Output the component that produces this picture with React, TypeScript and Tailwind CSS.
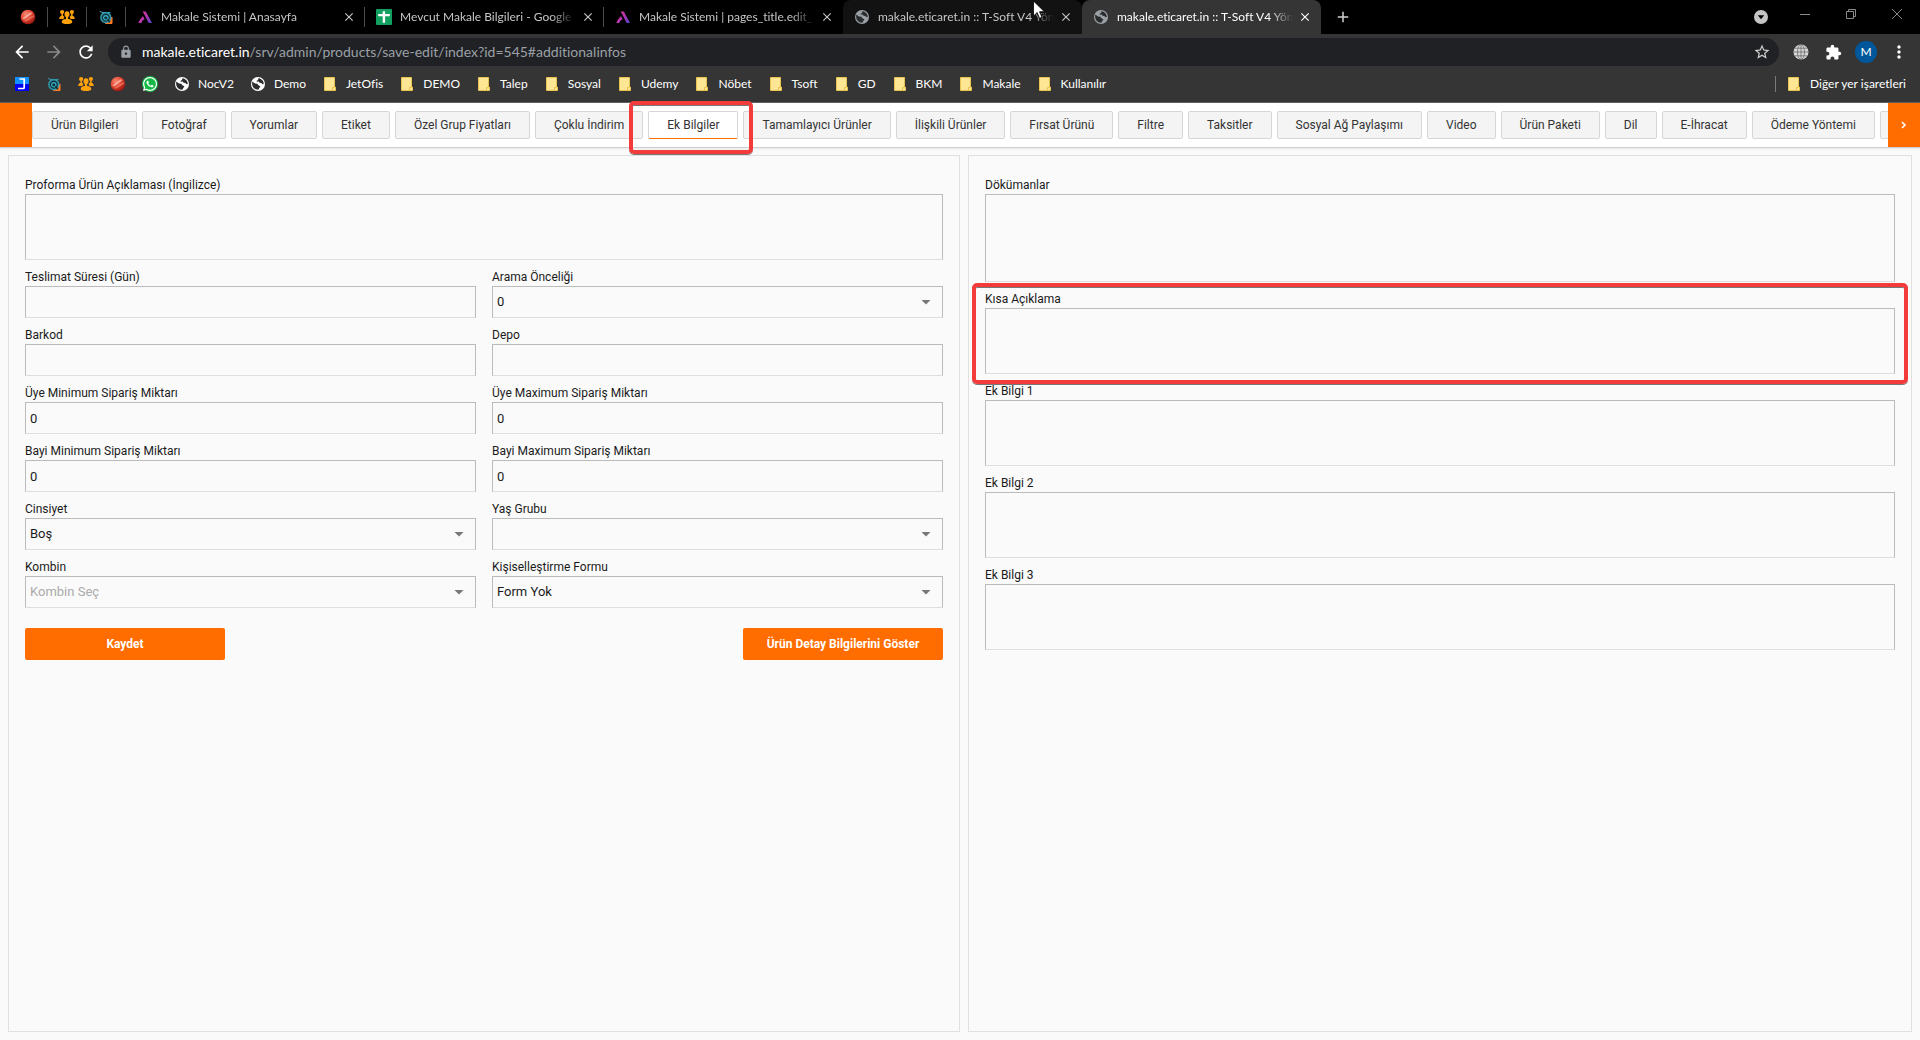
import type { ReactNode } from "react";
import {
  MdAdd,
  MdArrowBack,
  MdArrowForward,
  MdClose,
  MdExtension,
  MdLock,
  MdMoreVert,
  MdRefresh,
  MdStarBorder,
} from "react-icons/md";
import { FaWhatsapp } from "react-icons/fa";

/* ---------- favicons ---------- */

function RedBall() {
  return (
    <svg viewBox="0 0 16 16" className="size-4" aria-hidden="true">
      <defs>
        <radialGradient id="ball" cx="0.35" cy="0.3" r="0.75">
          <stop offset="0" stopColor="#f58a72" />
          <stop offset="0.55" stopColor="#e0402c" />
          <stop offset="1" stopColor="#8e150f" />
        </radialGradient>
      </defs>
      <circle cx="8" cy="8" r="7.3" fill="url(#ball)" />
      <path d="M2.2 9.400 10.500 3.200 12.500 4.200 4 10.400z" fill="#ffd9cd" opacity="0.6" />
      <path d="M4 12 13.600 6.200 14.200 7.400 6 12.600z" fill="#f9b3a2" opacity="0.45" />
    </svg>
  );
}

function GoldPeople() {
  return (
    <svg viewBox="0 0 16 16" className="size-4" fill="#ffa20a" aria-hidden="true">
      <circle cx="3.100" cy="3" r="2.100" />
      <circle cx="12.900" cy="3" r="2.100" />
      <path d="M2.400 4.500h1.500v2l1.600 1.600-1.200 2H0.300c0-1.800.5-2.600 2.100-3.300zM13.600 4.500h-1.500v2l-1.600 1.600 1.200 2h4c0-1.800-.5-2.600-2.100-3.300z" />
      <ellipse cx="8" cy="5.200" rx="2.500" ry="3" />
      <path d="M7 7.500h2v2.300c2.600.5 4.300 1.400 4.300 3.200 0 1.500-2.300 2.100-5.300 2.100s-5.300-.6-5.300-2.100c0-1.800 1.700-2.700 4.300-3.200z" />
    </svg>
  );
}

function TealQ() {
  return (
    <svg viewBox="0 0 16 16" className="size-4" fill="none" aria-hidden="true">
      <path d="M7.500 14.500 14 8v6.500z" fill="#ff7a21" stroke="#ff7a21" />
      <path d="M1.800 2.200 4.800 3.800" stroke="#3f7f8f" strokeWidth="1.300" />
      <path d="M4 3.600h8.500" stroke="#2f9bb0" strokeWidth="1.300" />
      <circle cx="7.800" cy="8.600" r="4.900" stroke="#2f9bb0" strokeWidth="1.500" fill="#12303a" />
      <circle cx="7.800" cy="8.800" r="2.200" stroke="#37b4c9" strokeWidth="1.200" />
      <path d="m9.500 10.200 2.400 3" stroke="#0e2a33" strokeWidth="1.500" />
    </svg>
  );
}

function PurpleA() {
  return (
    <svg viewBox="0 0 16 16" className="size-4" aria-hidden="true">
      <defs>
        <linearGradient id="peak" x1="0" x2="1" y1="0.300" y2="1">
          <stop offset="0" stopColor="#e0358f" />
          <stop offset="0.550" stopColor="#a436b8" />
          <stop offset="1" stopColor="#4a49c8" />
        </linearGradient>
      </defs>
      <path
        d="M5.600 2.500h3.200L15 14h-3.300L7.300 5.600zM6 7l1.600 3.200-2 1.300L4.300 14H1.200L3 10.600z"
        fill="url(#peak)"
      />
    </svg>
  );
}

function Sheets() {
  return (
    <svg viewBox="0 0 16 16" className="size-4" aria-hidden="true">
      <rect width="16" height="16" rx="1" fill="#11a05f" />
      <path d="M6.700 2.200h2.400v2.900h4.700v2.200H9.100v6.500H6.700V7.300H2.200V5.100h4.500z" fill="#fff" />
    </svg>
  );
}

function Globe({ dim = false }: { dim?: boolean }) {
  return (
    <svg viewBox="0 0 16 16" className={dim ? "size-4 text-[#9aa0a6]" : "size-4 text-white"} aria-hidden="true">
      <circle cx="8" cy="8" r="7" fill="currentColor" />
      <path
        d="M2.300 5.600 5 7.600l2.300.2c.8.500.6 1.300 1.400 1.700.9.500 1.700.3 1.600 1.300-.2.800-1.200.8-1.300 1.600l-.6 1.300c-3 .1-5.300-1.400-6-4.200-.3-1.300-.4-2.700-.1-3.900zM8.600 2.300 8 4l-1.300.8v1l2-.2.900 1.200 1.700.3 1.300 1.200 1.200-.2c-.1-2.600-1.900-5.200-5.200-6z"
        fill="#2b2c2e"
      />
    </svg>
  );
}

function BlueJ() {
  return (
    <svg viewBox="0 0 16 16" className="size-4" aria-hidden="true">
      <path d="M1 1h14v7H1z" fill="#1390ff" />
      <path d="M1 8h14v7H1z" fill="#0000f5" />
      <path d="M5.500 3h4.700v8.500c0 .7-.4 1-1 1H4" fill="none" stroke="#fff" strokeWidth="1.700" />
    </svg>
  );
}

function Whatsapp() {
  return (
    <span className="flex size-4 items-center justify-center rounded-full bg-[#14b845] text-white">
      <FaWhatsapp className="size-4" />
    </span>
  );
}

function Folder() {
  return (
    <svg viewBox="0 0 12 14" className="h-[14px] w-3 shrink-0" aria-hidden="true">
      <path d="M0.500 0.500h10v9.500h1v3.500h-11z" fill="#ffe694" stroke="#e9c34d" />
      <path d="M8.500 13.500V10.500h2" fill="none" stroke="#e9c34d" />
    </svg>
  );
}

/* ---------- browser chrome ---------- */

function PinnedTab({ label, children }: { label: string; children: ReactNode }) {
  return (
    <button
      type="button"
      aria-label={label}
      className="flex h-5 w-[39px] shrink-0 items-center justify-center border-r border-[#4a4a4a]"
    >
      {children}
    </button>
  );
}

type TabState = "idle" | "plain" | "hover" | "active";

function BrowserTab({ title, icon, state }: { title: string; icon: ReactNode; state: TabState }) {
  const look = {
    idle: "h-5 border-r border-[#4a4a4a] pr-[7px] text-[#c6c6c6]",
    plain: "h-5 pr-2 text-[#c6c6c6]",
    hover: "h-[34px] rounded-t-lg bg-[#121212] pr-2 text-[#c6c6c6]",
    active: "h-[34px] rounded-t-lg bg-[#353535] pr-2 text-white",
  }[state];
  return (
    <div className={`flex w-[239px] shrink-0 items-center pl-[11px] ${look}`}>
      {icon}
      <span className="ml-2 min-w-0 flex-1 overflow-hidden whitespace-nowrap [mask-image:linear-gradient(to_right,black_86%,transparent)]">
        {title}
      </span>
      <button type="button" aria-label="Sekmeyi kapat" className="ml-1 flex size-4 items-center justify-center">
        <MdClose className="size-[14px]" />
      </button>
    </div>
  );
}

function TabStrip() {
  return (
    <div className="relative flex h-[34px] items-center bg-black pl-[9px]">
      <PinnedTab label="Sabit sekme 1">
        <RedBall />
      </PinnedTab>
      <PinnedTab label="Sabit sekme 2">
        <GoldPeople />
      </PinnedTab>
      <PinnedTab label="Sabit sekme 3">
        <TealQ />
      </PinnedTab>
      <BrowserTab title="Makale Sistemi | Anasayfa" icon={<PurpleA />} state="idle" />
      <BrowserTab title="Mevcut Makale Bilgileri - Google" icon={<Sheets />} state="idle" />
      <BrowserTab title="Makale Sistemi | pages_title.edit_" icon={<PurpleA />} state="plain" />
      <BrowserTab title="makale.eticaret.in :: T-Soft V4 Yön" icon={<Globe dim />} state="hover" />
      <BrowserTab title="makale.eticaret.in :: T-Soft V4 Yön" icon={<Globe dim />} state="active" />
      <button type="button" aria-label="Yeni sekme" className="ml-3 flex size-5 items-center justify-center text-[#d0d0d0]">
        <MdAdd className="size-[18px]" />
      </button>
      <div className="ml-auto flex items-center text-[#8a8a8a]">
        <button type="button" aria-label="Sekme ara" className="mr-8">
          <svg viewBox="0 0 14 14" className="size-[14px]">
            <circle cx="7" cy="7" r="7" fill="#c4c4c4" />
            <path d="M3.800 5.200h6.400L7 9.200z" fill="#000" />
          </svg>
        </button>
        <button type="button" aria-label="Simge durumuna küçült" className="mb-[6px] w-[46px]">
          <svg viewBox="0 0 10 10" className="size-[10px]" stroke="currentColor">
            <path d="M0 5.500h10" />
          </svg>
        </button>
        <button type="button" aria-label="Geri yükle" className="mb-[6px] w-[46px]">
          <svg viewBox="0 0 10 10" className="size-[10px]" fill="none" stroke="currentColor">
            <path d="M0.500 2.500h7v7h-7zM2.500 2.500v-2h7v7h-2" />
          </svg>
        </button>
        <button type="button" aria-label="Kapat" className="mb-[6px] w-[28px]">
          <svg viewBox="0 0 10 10" className="size-[10px]" stroke="currentColor">
            <path d="M0 0l10 10M10 0 0 10" />
          </svg>
        </button>
      </div>
      <svg viewBox="0 0 12 19" className="absolute top-0 left-[1033px] h-[19px] w-3" aria-hidden="true">
        <path d="M0.500 1v15l3.600-3.400 2.500 5.700 2.400-1-2.500-5.600h4.900z" fill="#fff" stroke="#000" strokeWidth="0.800" />
      </svg>
    </div>
  );
}

function Toolbar() {
  return (
    <div className="flex items-center bg-[#353535] pt-1 pr-[11px] pl-3 text-white">
      <button type="button" aria-label="Geri" className="flex size-5 items-center justify-center">
        <MdArrowBack className="size-5" />
      </button>
      <button type="button" aria-label="İleri" className="ml-3 flex size-5 items-center justify-center text-[#888888]">
        <MdArrowForward className="size-5" />
      </button>
      <button type="button" aria-label="Yenile" className="ml-3 flex size-5 items-center justify-center">
        <MdRefresh className="size-5" />
      </button>
      <div className="ml-3 flex h-7 flex-1 items-center rounded-full bg-[#202124] pr-2 pl-[11px]">
        <MdLock className="size-[14px] text-[#9aa0a6]" />
        <a href="#additionalinfos" className="ml-[9px] text-sm text-[#9aa0a6]">
          <span className="text-white">makale.eticaret.in</span>
          /srv/admin/products/save-edit/index?id=545#additionalinfos
        </a>
        <button type="button" aria-label="Yer işareti ekle" className="ml-auto text-[#d0d0d0]">
          <MdStarBorder className="size-[18px]" />
        </button>
      </div>
      <button type="button" aria-label="Çeviri uzantısı" className="ml-[14px]">
        <svg viewBox="0 0 16 16" className="size-4" fill="none" stroke="#6b6b6b" strokeWidth="0.800">
          <circle cx="8" cy="8" r="7.500" fill="#d6d6d6" stroke="none" />
          <ellipse cx="8" cy="8" rx="3.500" ry="7.500" />
          <path d="M8 0.500v15M0.500 8h15M1.800 4.200h12.400M1.800 11.800h12.400" />
        </svg>
      </button>
      <button type="button" aria-label="Uzantılar" className="ml-4">
        <MdExtension className="size-[17px]" />
      </button>
      <button
        type="button"
        className="ml-[13px] flex size-[22px] items-center justify-center rounded-full bg-[#01579b] text-xs"
      >
        M
      </button>
      <button type="button" aria-label="Menü" className="ml-3">
        <MdMoreVert className="size-5" />
      </button>
    </div>
  );
}

const folders = [
  "JetOfis",
  "DEMO",
  "Talep",
  "Sosyal",
  "Udemy",
  "Nöbet",
  "Tsoft",
  "GD",
  "BKM",
  "Makale",
  "Kullanılır",
];

function BookmarksBar() {
  return (
    <div className="flex h-[37px] items-center border-b border-[#606060] bg-[#353535] pr-[14px] pl-[14px] text-white">
      <a href="#jira" aria-label="Jira" className="mr-4">
        <BlueJ />
      </a>
      <a href="#destek" aria-label="Destek" className="mr-4">
        <TealQ />
      </a>
      <a href="#ekip" aria-label="Ekip" className="mr-4">
        <GoldPeople />
      </a>
      <a href="#tsoft" aria-label="T-Soft" className="mr-4">
        <RedBall />
      </a>
      <a href="#whatsapp" aria-label="WhatsApp" className="mr-4">
        <Whatsapp />
      </a>
      <a href="#nocv2" className="mr-4 flex items-center gap-2">
        <Globe />
        NocV2
      </a>
      <a href="#demo" className="mr-[18px] flex items-center gap-2">
        <Globe />
        Demo
      </a>
      {folders.map((name) => (
        <a key={name} href={`#${name}`} className="mr-[18px] flex items-center gap-[10px]">
          <Folder />
          {name}
        </a>
      ))}
      <div className="ml-auto h-4 w-px shrink-0 bg-[#7a7a7a]" />
      <a href="#diger" className="ml-3 flex items-center gap-[10px]">
        <Folder />
        Diğer yer işaretleri
      </a>
    </div>
  );
}

/* ---------- page ---------- */

function Highlight({ className }: { className: string }) {
  return (
    <span
      aria-hidden="true"
      className={`pointer-events-none absolute z-20 rounded-[5px] border-4 border-[#f43b3b] shadow-[0_1px_0_#777,inset_0_1px_0_#777] ${className}`}
    />
  );
}

const sections = [
  "Ürün Bilgileri",
  "Fotoğraf",
  "Yorumlar",
  "Etiket",
  "Özel Grup Fiyatları",
  "Çoklu İndirim",
  "Ek Bilgiler",
  "Tamamlayıcı Ürünler",
  "İlişkili Ürünler",
  "Fırsat Ürünü",
  "Filtre",
  "Taksitler",
  "Sosyal Ağ Paylaşımı",
  "Video",
  "Ürün Paketi",
  "Dil",
  "E-İhracat",
  "Ödeme Yöntemi",
];

const sectionTab = "block h-7 rounded-xs border border-[#d6d6d6] px-[18px] text-[#333333]";

function SectionTabs() {
  return (
    <nav className="relative z-10 flex h-[45px] border-b border-[#cfcfcf] bg-white shadow-[0_1px_2px_rgba(0,0,0,0.08)]">
      <button type="button" aria-label="Önceki sekmeler" className="w-8 shrink-0 bg-[#ff6c00]" />
      <div className="flex min-w-0 flex-1 items-center gap-[5px] overflow-x-clip">
        {sections.map((name) => {
          const active = name === "Ek Bilgiler";
          return (
            <div key={name} className="relative shrink-0">
              <button
                type="button"
                className={`${sectionTab} ${active ? "border-b-[#ff6c00] bg-white" : "bg-[#f4f4f4]"}`}
              >
                {name}
              </button>
              {active && <Highlight className="-top-[10px] -right-[15px] -bottom-[15px] -left-[19px]" />}
            </div>
          );
        })}
        <button type="button" aria-label="Diğer" className={`${sectionTab} shrink-0 bg-[#f4f4f4]`} />
      </div>
      <button
        type="button"
        aria-label="Sonraki sekmeler"
        className="flex w-8 shrink-0 items-center justify-center bg-[#ff6c00] text-white"
      >
        <svg viewBox="0 0 6 8" className="h-2 w-[6px]" fill="none" stroke="currentColor" strokeWidth="1.600">
          <path d="M1 1l3 3-3 3" />
        </svg>
      </button>
    </nav>
  );
}

const box =
  "block w-full rounded-none border border-[#bbbbbb] border-b-[#dedede] bg-[#fafafa] px-1 text-[13px] outline-none";

function Label({ id, text }: { id: string; text: string }) {
  return (
    <label htmlFor={id} className="mb-[2px] block leading-[14px]">
      {text}
    </label>
  );
}

function Area({ id, label, tall = false, marked = false }: { id: string; label: string; tall?: boolean; marked?: boolean }) {
  return (
    <div className="relative">
      <Label id={id} text={label} />
      <textarea id={id} className={`${box} resize-none ${tall ? "h-[88px]" : "h-[66px]"}`} />
      {marked && <Highlight className="-inset-x-[13px] -top-[9px] -bottom-[10px]" />}
    </div>
  );
}

function TextField({ id, label, value = "" }: { id: string; label: string; value?: string }) {
  return (
    <div>
      <Label id={id} text={label} />
      <input id={id} type="text" defaultValue={value} className={`${box} h-8`} />
    </div>
  );
}

function SelectField({ id, label, value, muted = false }: { id: string; label: string; value: string; muted?: boolean }) {
  return (
    <div>
      <Label id={id} text={label} />
      <div className="relative">
        <select id={id} className={`${box} h-8 appearance-none ${muted ? "text-[#aaaaaa]" : "text-[#1a1a1a]"}`}>
          <option>{value}</option>
        </select>
        <svg
          viewBox="0 0 10 5"
          className="pointer-events-none absolute inset-y-0 right-3 my-auto h-[5px] w-[10px]"
          aria-hidden="true"
        >
          <path d="M0.500 0h9L5 4.500z" fill="#777777" />
        </svg>
      </div>
    </div>
  );
}

const panel = "h-full border border-[#e0e0e0] px-4 pt-[22px] pb-4";
const action = "h-8 w-[200px] rounded-xs bg-[#ff6c00] font-bold text-white";

export default function App() {
  return (
    <div className="flex min-h-screen flex-col overflow-x-clip bg-[#fafafa] text-xs text-[#1a1a1a] [font-family:Roboto,sans-serif]">
      <header className="[font-family:Lato,'Noto_Sans',sans-serif] [font-variant-ligatures:none]">
        <TabStrip />
        <Toolbar />
        <BookmarksBar />
      </header>
      <SectionTabs />
      <main className="flex flex-1 pt-[7px] pb-2">
        <section className="w-1/2 pl-2">
          <form className={panel}>
            <Area id="proforma" label="Proforma Ürün Açıklaması (İngilizce)" />
            <div className="mt-[10px] grid grid-cols-2 gap-x-4 gap-y-[10px]">
              <TextField id="teslimat" label="Teslimat Süresi (Gün)" />
              <SelectField id="arama" label="Arama Önceliği" value="0" />
              <TextField id="barkod" label="Barkod" />
              <TextField id="depo" label="Depo" />
              <TextField id="uye-min" label="Üye Minimum Sipariş Miktarı" value="0" />
              <TextField id="uye-max" label="Üye Maximum Sipariş Miktarı" value="0" />
              <TextField id="bayi-min" label="Bayi Minimum Sipariş Miktarı" value="0" />
              <TextField id="bayi-max" label="Bayi Maximum Sipariş Miktarı" value="0" />
              <SelectField id="cinsiyet" label="Cinsiyet" value="Boş" />
              <SelectField id="yas" label="Yaş Grubu" value="" />
              <SelectField id="kombin" label="Kombin" value="Kombin Seç" muted />
              <SelectField id="kisisel" label="Kişiselleştirme Formu" value="Form Yok" />
            </div>
            <div className="mt-5 flex justify-between">
              <button type="button" className={action}>
                Kaydet
              </button>
              <button type="button" className={action}>
                Ürün Detay Bilgilerini Göster
              </button>
            </div>
          </form>
        </section>
        <section className="w-1/2 px-2">
          <form className={`${panel} flex flex-col gap-[10px]`}>
            <Area id="dokumanlar" label="Dökümanlar" tall />
            <Area id="kisa" label="Kısa Açıklama" marked />
            <Area id="bilgi1" label="Ek Bilgi 1" />
            <Area id="bilgi2" label="Ek Bilgi 2" />
            <Area id="bilgi3" label="Ek Bilgi 3" />
          </form>
        </section>
      </main>
    </div>
  );
}
